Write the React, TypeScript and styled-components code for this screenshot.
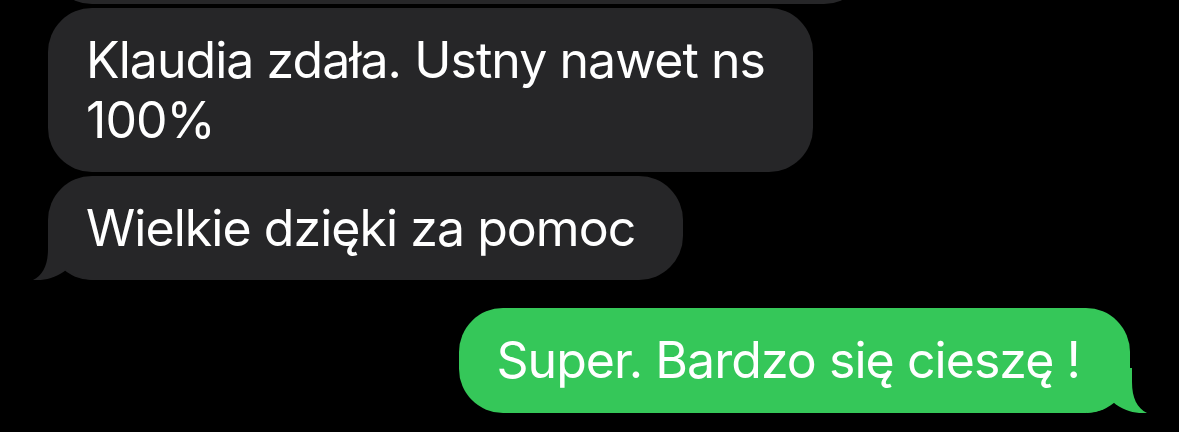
import styled, { createGlobalStyle } from 'styled-components'

const GlobalStyle = createGlobalStyle`
  html, body {
    margin: 0;
    padding: 0;
    background: #000;
  }
`

const Thread = styled.div`
  width: 1179px;
  height: 432px;
  overflow: hidden;
  background: #000;
  display: flex;
  flex-direction: column;
  justify-content: flex-end;
  gap: 28px;
  padding: 0 49px 19px 48px;
  box-sizing: border-box;
  font-family: Inter, 'Noto Sans', sans-serif;
`

const Group = styled.div<{ $outgoing?: boolean }>`
  display: flex;
  flex-direction: column;
  gap: 4px;
  align-items: ${p => (p.$outgoing ? 'flex-end' : 'flex-start')};
`

const Bubble = styled.div<{ $outgoing?: boolean }>`
  position: relative;
  max-width: 820px;
  box-sizing: border-box;
  padding: ${p => (p.$outgoing ? '22px 50px 23px 37px' : '22px 48px 22px 38px')};
  border-radius: 44px;
  background: ${p => (p.$outgoing ? '#35c759' : '#262628')};
  color: #fff;
  font-size: 50px;
  line-height: 60px;
  letter-spacing: -0.95px;
  white-space: pre-line;
`

const Tail = styled.svg<{ $outgoing?: boolean }>`
  position: absolute;
  bottom: 0;
  width: 60px;
  height: 45px;
  ${p => (p.$outgoing ? 'right: -17px; transform: scaleX(-1);' : 'left: -15px;')}
  fill: ${p => (p.$outgoing ? '#35c759' : '#262628')};
`

type Message = { text: string; tail?: boolean }

const incoming: Message[] = [
  { text: 'Trzymam kciuki za dzisiejszy egzamin, daj znać jak jej poszło na pisemnym' },
  { text: 'Klaudia zdała. Ustny nawet ns\n100%' },
  { text: 'Wielkie dzięki za pomoc', tail: true },
]

const outgoing: Message[] = [{ text: 'Super. Bardzo się cieszę !', tail: true }]

const BubbleTail = ({ outgoing }: { outgoing?: boolean }) => (
  <Tail $outgoing={outgoing} viewBox="0 0 60 45">
    <path d="M15 0 L15 14 C15 30 10 40 0 45 C10 46 24 43 34 34 C40 40 48 44 60 45 L60 0 Z" />
  </Tail>
)

export default function App() {
  return (
    <>
      <GlobalStyle />
      <Thread>
        <Group>
          {incoming.map((m, i) => (
            <Bubble key={i}>
              {m.text}
              {m.tail && <BubbleTail />}
            </Bubble>
          ))}
        </Group>
        <Group $outgoing>
          {outgoing.map((m, i) => (
            <Bubble key={i} $outgoing>
              {m.text}
              {m.tail && <BubbleTail outgoing />}
            </Bubble>
          ))}
        </Group>
      </Thread>
    </>
  )
}
